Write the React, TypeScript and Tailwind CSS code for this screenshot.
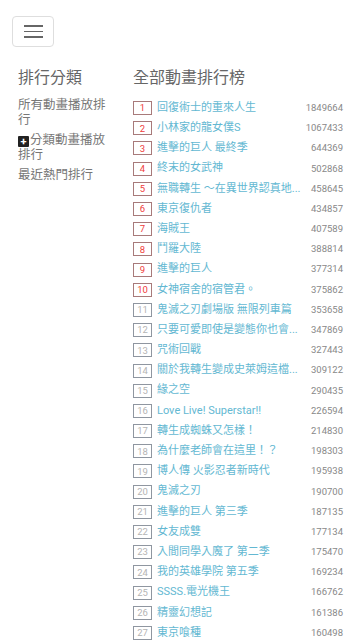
const ranking: [string, number][] = [
  ['回復術士的重來人生', 1849664],
  ['小林家的龍女僕S', 1067433],
  ['進擊的巨人 最終季', 644369],
  ['終末的女武神', 502868],
  ['無職轉生 ～在異世界認真地...', 458645],
  ['東京復仇者', 434857],
  ['海賊王', 407589],
  ['鬥羅大陸', 388814],
  ['進擊的巨人', 377314],
  ['女神宿舍的宿管君。', 375862],
  ['鬼滅之刃劇場版 無限列車篇', 353658],
  ['只要可愛即使是變態你也會...', 347869],
  ['咒術回戰', 327443],
  ['關於我轉生變成史萊姆這檔...', 309122],
  ['緣之空', 290435],
  ['Love Live! Superstar!!', 226594],
  ['轉生成蜘蛛又怎樣！', 214830],
  ['為什麼老師會在這里！？', 198303],
  ['博人傳 火影忍者新時代', 195938],
  ['鬼滅之刃', 190700],
  ['進擊的巨人 第三季', 187135],
  ['女友成雙', 177134],
  ['入間同學入魔了 第二季', 175470],
  ['我的英雄學院 第五季', 169234],
  ['SSSS.電光機王', 166762],
  ['精靈幻想記', 161386],
  ['東京喰種', 160498],
];

function RankBadge({ rank }: { rank: number }) {
  const top = rank <= 10;
  return (
    <div
      className={
        top
          ? 'w-[19px] h-[14px] shrink-0 flex items-center justify-center border-[1.5px] border-[#a87a7a] text-[#f03c3c] text-[9.5px] leading-none'
          : 'w-[19px] h-[14px] shrink-0 flex items-center justify-center border-[1.5px] border-[#8f96a0] text-[#b4b4b4] text-[9.5px] leading-none'
      }
    >
      {rank}
    </div>
  );
}

export default function App() {
  return (
    <div className="min-h-screen bg-white font-['Roboto','Noto_Sans_CJK_TC',sans-serif]">
      {/* top bar */}
      <div className="pt-[16px] pl-[12px]">
        <button className="w-[42px] h-[31px] border border-[#dedede] rounded-[4px] flex flex-col items-center justify-center gap-[4px]">
          <span className="block w-[19px] h-[1.5px] bg-[#666]" />
          <span className="block w-[19px] h-[1.5px] bg-[#666]" />
          <span className="block w-[19px] h-[1.5px] bg-[#666]" />
        </button>
      </div>

      <div className="flex pt-[20px]">
        {/* left menu */}
        <div className="w-[133px] shrink-0 pl-[18px] pr-[20px]">
          <h2 className="text-[16px] leading-[22px] text-[#666]">排行分類</h2>
          <ul className="mt-[8px] flex flex-col gap-[5px] text-[12.5px] leading-[15px] text-[#777]">
            <li>所有動畫播放排行</li>
            <li>
              <span className="inline-flex w-[11px] h-[11px] bg-[#222] text-white rounded-[1px] items-center justify-center align-[-1px] mr-[1px] text-[11px] font-bold leading-none">
                +
              </span>
              分類動畫播放排行
            </li>
            <li>最近熱門排行</li>
          </ul>
        </div>

        {/* ranking list */}
        <div className="flex-1 pr-[17px]">
          <h2 className="text-[16px] leading-[22px] text-[#666]">全部動畫排行榜</h2>
          <div className="mt-[9px]">
            {ranking.map(([title, views], i) => (
              <div key={i} className="h-[20.2px] flex items-center">
                <RankBadge rank={i + 1} />
                <div className="ml-[5px] w-[145px] whitespace-nowrap overflow-hidden text-[11px] text-[#63b8d2]">
                  {title}
                </div>
                <div className="flex-1 text-right text-[9.5px] text-[#888]">{views}</div>
              </div>
            ))}
          </div>
        </div>
      </div>
    </div>
  );
}
